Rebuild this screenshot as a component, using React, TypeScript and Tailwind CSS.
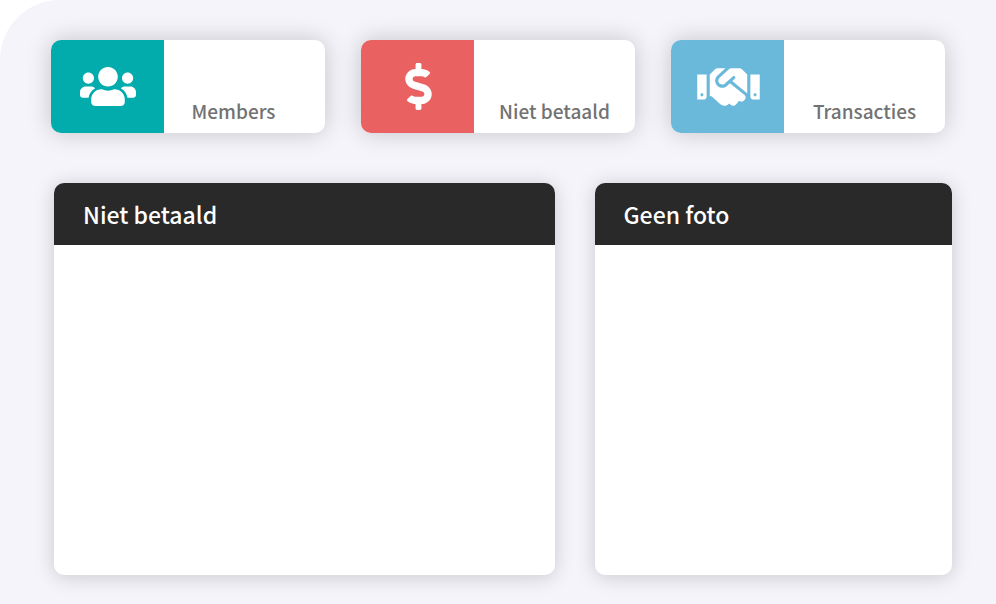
import type { IconType } from "react-icons";
import { FaDollarSign, FaHandshake, FaUsers } from "react-icons/fa";

type Stat = { label: string; Icon: IconType; tile: string; icon: string; text: string };

const stats: Stat[] = [
  { label: "Members", Icon: FaUsers, tile: "bg-[#02acac]", icon: "h-[45px] w-14", text: "pr-[22px]" },
  { label: "Niet betaald", Icon: FaDollarSign, tile: "bg-[#e96161]", icon: "h-[47px] w-[27px]", text: "" },
  { label: "Transacties", Icon: FaHandshake, tile: "bg-[#6ab8da]", icon: "h-[50px] w-[63px]", text: "" },
];

function StatCard({ label, Icon, tile, icon, text }: Stat) {
  return (
    <article className="flex h-[93px] flex-1 overflow-hidden rounded-[10px] bg-white shadow-[0_0_24px_rgba(0,0,0,0.2)]">
      <div className={`flex w-[113px] shrink-0 items-center justify-center pl-px text-white ${tile}`}>
        <Icon className={icon} aria-hidden="true" />
      </div>
      <div className={`flex flex-1 items-end justify-center pb-1 ${text}`}>
        <p className="text-[19px] leading-9 font-medium whitespace-nowrap text-[#727272]">{label}</p>
      </div>
    </article>
  );
}

function Panel({ title }: { title: string }) {
  return (
    <section className="flex h-[392px] flex-col overflow-hidden rounded-[10px] bg-white shadow-[0_2px_20px_rgba(0,0,0,0.18)]">
      <header className="flex h-[62px] items-center bg-[#292929] px-[29px]">
        <h2 className="text-[23px] leading-8 font-medium text-white">{title}</h2>
      </header>
    </section>
  );
}

export default function App() {
  return (
    <div className="bg-white font-['Noto_Sans_CJK_SC','Noto_Sans',sans-serif]">
      <main className="min-h-screen rounded-tl-[60px] bg-[#f5f4fa] pt-10">
        <div className="flex gap-9 px-[51px]">
          {stats.map((stat) => (
            <StatCard key={stat.label} {...stat} />
          ))}
        </div>
        <div className="mt-[50px] grid grid-cols-[7fr_5fr] gap-10 pr-11 pl-[54px]">
          <Panel title="Niet betaald" />
          <Panel title="Geen foto" />
        </div>
      </main>
    </div>
  );
}
